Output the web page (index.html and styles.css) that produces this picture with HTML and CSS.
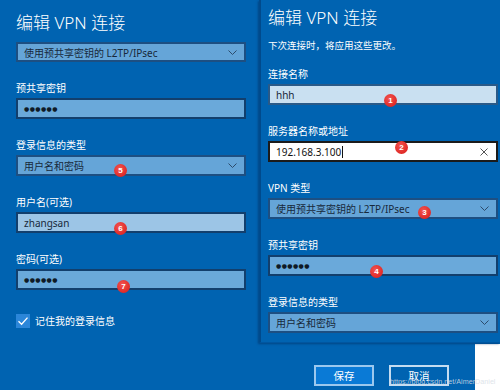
FILE: index.html
```html
<!DOCTYPE html>
<html lang="zh-CN">
<head>
<meta charset="utf-8">
<title>编辑 VPN 连接</title>
<link rel="stylesheet" href="styles.css">
</head>
<body>
<div class="screen">
  <section class="pane-left">
    <h1 class="title">编辑 VPN 连接</h1>
    <div class="box select select-top">
      <span class="value">使用预共享密钥的 L2TP/IPsec</span>
      <svg class="chev" width="9" height="5" viewBox="0 0 9 5"><polyline points="0.5,0.5 4.5,4.5 8.5,0.5" fill="none" stroke="#2c4b6b" stroke-width="1"/></svg>
    </div>
    <div class="field">
      <div class="label">预共享密钥</div>
      <div class="box input mid"><span class="dots">●●●●●●</span></div>
    </div>
    <div class="field">
      <div class="label">登录信息的类型</div>
      <div class="box select">
        <span class="value">用户名和密码</span>
        <svg class="chev" width="9" height="5" viewBox="0 0 9 5"><polyline points="0.5,0.5 4.5,4.5 8.5,0.5" fill="none" stroke="#2c4b6b" stroke-width="1"/></svg>
        <span class="badge b5">5</span>
      </div>
    </div>
    <div class="field">
      <div class="label">用户名(可选)</div>
      <div class="box input light">
        <span class="value">zhangsan</span>
        <span class="badge b6">6</span>
      </div>
    </div>
    <div class="field">
      <div class="label">密码(可选)</div>
      <div class="box input mid">
        <span class="dots">●●●●●●</span>
        <span class="badge b7">7</span>
      </div>
    </div>
    <div class="check">
      <span class="checkbox"><svg width="14" height="14" viewBox="0 0 14 14"><polyline points="2.5,7.2 5.6,10.2 11.5,3.6" fill="none" stroke="#fff" stroke-width="1.3"/></svg></span>
      <span class="check-label">记住我的登录信息</span>
    </div>
  </section>

  <section class="pane-right">
    <div class="dialog">
      <h1 class="title">编辑 VPN 连接</h1>
      <p class="subtitle">下次连接时，将应用这些更改。</p>
      <div class="field first">
        <div class="label">连接名称</div>
        <div class="box input pale">
          <span class="value">hhh</span>
          <span class="badge b1">1</span>
        </div>
      </div>
      <div class="field">
        <div class="label">服务器名称或地址</div>
        <div class="box input focus">
          <span class="value">192.168.3.100</span><span class="caret"></span>
          <svg class="clear" width="8" height="8" viewBox="0 0 8 8"><path d="M0.5 0.5 L7.5 7.5 M7.5 0.5 L0.5 7.5" stroke="#555" stroke-width="1" fill="none"/></svg>
          <span class="badge b2">2</span>
        </div>
      </div>
      <div class="field">
        <div class="label">VPN 类型</div>
        <div class="box select">
          <span class="value">使用预共享密钥的 L2TP/IPsec</span>
          <svg class="chev" width="9" height="5" viewBox="0 0 9 5"><polyline points="0.5,0.5 4.5,4.5 8.5,0.5" fill="none" stroke="#2c4b6b" stroke-width="1"/></svg>
          <span class="badge b3">3</span>
        </div>
      </div>
      <div class="field">
        <div class="label">预共享密钥</div>
        <div class="box input mid">
          <span class="dots">●●●●●●</span>
          <span class="badge b4">4</span>
        </div>
      </div>
      <div class="field">
        <div class="label">登录信息的类型</div>
        <div class="box select">
          <span class="value">用户名和密码</span>
          <svg class="chev" width="9" height="5" viewBox="0 0 9 5"><polyline points="0.5,0.5 4.5,4.5 8.5,0.5" fill="none" stroke="#2c4b6b" stroke-width="1"/></svg>
        </div>
      </div>
    </div>
    <div class="footer">
      <div class="buttons">
        <button class="btn primary">保存</button>
        <button class="btn">取消</button>
      </div>
      <div class="blank"></div>
      <span class="watermark">https://blog.csdn.net/AimerDaniel</span>
    </div>
  </section>
</div>
</body>
</html>
```

FILE: styles.css
```css
html, body {
  margin: 0;
  padding: 0;
}
body {
  width: 500px;
  height: 390px;
  overflow: hidden;
  background: #0063b1;
  font-family: "Noto Sans", "Noto Sans CJK SC", sans-serif;
  color: #fff;
}
.screen {
  display: flex;
  width: 500px;
  height: 390px;
}
.pane-left {
  width: 259px;
  box-sizing: border-box;
  padding: 11px 13px 0 16px;
  display: flex;
  flex-direction: column;
}
.title {
  margin: 0;
  font-size: 17px;
  line-height: 24px;
  font-weight: 300;
  color: #fff;
  white-space: nowrap;
}
.select-top {
  margin-top: 7px;
  height: 20px !important;
}
.field {
  margin-top: 19px;
  display: flex;
  flex-direction: column;
}
.label {
  font-size: 10px;
  line-height: 14px;
  margin-bottom: 3px;
  white-space: nowrap;
}
.box {
  position: relative;
  height: 21px;
  box-sizing: border-box;
  border: 2px solid #1a4a7c;
  padding: 0 6px;
  display: flex;
  align-items: center;
  font-size: 10px;
  color: #17283a;
}
.select {
  background: #65a5d8;
  border-color: #1d4f82;
}
.input.mid {
  background: #6aa9da;
  border-color: #123f6d;
}
.input.light {
  background: #9cc5e6;
  border-color: #123f6d;
}
.input.pale {
  background: #c9e0f1;
  border-color: #2a5a88;
}
.input.focus {
  background: #fff;
  border-color: #1b1b1b;
  color: #111;
}
.value {
  white-space: nowrap;
}
.chev {
  margin-left: auto;
  margin-right: 1px;
}
.dots {
  font-family: "DejaVu Sans", sans-serif;
  font-size: 6px;
  letter-spacing: 0.4px;
  color: #0f1a26;
}
.caret {
  width: 1px;
  height: 12px;
  background: #111;
  margin-left: 1px;
}
.clear {
  margin-left: auto;
  margin-right: 2px;
}
.check {
  margin-top: 24px;
  display: flex;
  align-items: center;
  height: 14px;
}
.checkbox {
  width: 14px;
  height: 14px;
  background: #2b86d9;
  display: block;
}
.checkbox svg {
  display: block;
}
.check-label {
  margin-left: 5px;
  font-size: 10px;
  line-height: 14px;
  white-space: nowrap;
}
.pane-right {
  flex: 1;
  display: flex;
  flex-direction: column;
}
.dialog {
  height: 343px;
  box-sizing: border-box;
  border-left: 2px solid #004a8c;
  border-bottom: 1px solid #0056a0;
  box-shadow: -1px 1px 2px rgba(0, 40, 90, 0.5);
  padding: 6px 2px 0 7px;
  display: flex;
  flex-direction: column;
  background: #0063b1;
  position: relative;
  z-index: 1;
}
.subtitle {
  margin: 9px 0 0;
  font-size: 9.5px;
  line-height: 14px;
  white-space: nowrap;
}
.field.first {
  margin-top: 14px;
}
.footer {
  flex: 1;
  display: flex;
  position: relative;
}
.buttons {
  margin-left: 55px;
  margin-top: 22px;
  display: flex;
  gap: 15px;
  align-items: flex-start;
}
.btn {
  width: 60px;
  height: 21px;
  box-sizing: border-box;
  border: 2px solid #c4dcf1;
  background: #0063b1;
  color: #fff;
  font-family: "Noto Sans CJK SC", sans-serif;
  font-size: 10.5px;
  padding: 0;
  line-height: 16px;
}
.btn.primary {
  background: #0a7ad6;
  border-color: #9cc8ee;
}
.blank {
  margin-left: auto;
  margin-top: 1px;
  width: 25px;
  background: #fff;
}
.watermark {
  position: absolute;
  left: 131px;
  top: 34px;
  font-family: "Liberation Sans", sans-serif;
  font-size: 7.2px;
  line-height: 9px;
  color: rgba(215, 222, 230, 0.85);
  white-space: nowrap;
  z-index: 2;
}
.badge {
  position: absolute;
  width: 13px;
  height: 13px;
  border-radius: 50%;
  background: radial-gradient(circle at 40% 35%, #f2534f, #e02a27 70%);
  color: #fff;
  font-family: "Liberation Sans", sans-serif;
  font-weight: 700;
  font-size: 8px;
  line-height: 13px;
  text-align: center;
  z-index: 3;
}
.b5 { left: 96px; top: 7px; }
.b6 { left: 96px; top: 8px; }
.b7 { left: 99px; top: 9px; }
.b1 { left: 114px; top: 8px; }
.b2 { left: 125px; top: -2px; }
.b3 { left: 148px; top: 6px; }
.b4 { left: 100px; top: 8px; }
```
